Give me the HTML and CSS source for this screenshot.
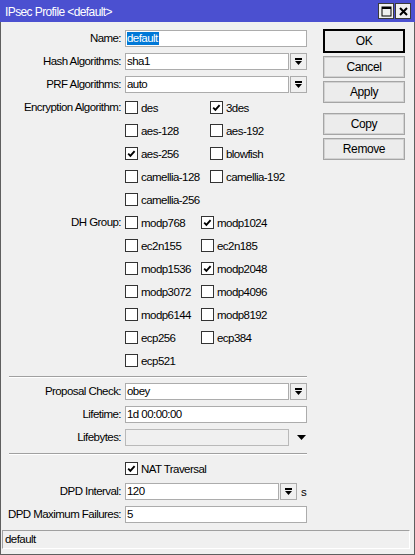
FILE: index.html
```html
<!DOCTYPE html>
<html>
<head>
<meta charset="utf-8">
<title>IPsec Profile</title>
<link rel="stylesheet" href="styles.css">
</head>
<body>
<div class="window">
  <div class="titlebar">
    <span class="title">IPsec Profile &lt;default&gt;</span>
    <div class="tb-buttons">
      <span class="tb-btn"><svg width="11" height="11" viewBox="0 0 11 11"><rect x="1" y="1" width="9" height="9" fill="none" stroke="#000" stroke-width="1"/><rect x="1" y="1" width="9" height="2" fill="#000"/></svg></span>
      <span class="tb-btn"><svg width="11" height="11" viewBox="0 0 11 11"><path d="M2 2L9 9M9 2L2 9" stroke="#000" stroke-width="2"/></svg></span>
    </div>
  </div>
  <div class="main">
    <div class="form">
      <label class="lbl">Name:</label>
      <div class="ctl"><div class="input"><span class="sel">default</span></div></div>

      <label class="lbl">Hash Algorithms:</label>
      <div class="ctl"><div class="input grow">sha1</div><span class="ddbtn"><svg width="9" height="8" viewBox="0 0 9 8"><rect x="1" y="0" width="7" height="2"/><polygon points="1,3 8,3 4.5,7"/></svg></span></div>

      <label class="lbl">PRF Algorithms:</label>
      <div class="ctl"><div class="input grow">auto</div><span class="ddbtn"><svg width="9" height="8" viewBox="0 0 9 8"><rect x="1" y="0" width="7" height="2"/><polygon points="1,3 8,3 4.5,7"/></svg></span></div>

      <label class="lbl">Encryption Algorithm:</label>
      <div class="checks enc">
        <span class="cb"><span class="box"></span>des</span>
        <span class="cb"><span class="box on"><svg width="11" height="11" viewBox="0 0 11 11"><polyline points="2.2,5.6 4.4,7.8 8.6,3.2" fill="none" stroke="#000" stroke-width="1.9"/></svg></span>3des</span>
        <span class="cb"><span class="box"></span>aes-128</span>
        <span class="cb"><span class="box"></span>aes-192</span>
        <span class="cb"><span class="box on"><svg width="11" height="11" viewBox="0 0 11 11"><polyline points="2.2,5.6 4.4,7.8 8.6,3.2" fill="none" stroke="#000" stroke-width="1.9"/></svg></span>aes-256</span>
        <span class="cb"><span class="box"></span>blowfish</span>
        <span class="cb"><span class="box"></span>camellia-128</span>
        <span class="cb"><span class="box"></span>camellia-192</span>
        <span class="cb"><span class="box"></span>camellia-256</span>
      </div>

      <label class="lbl">DH Group:</label>
      <div class="checks dh">
        <span class="cb"><span class="box"></span>modp768</span>
        <span class="cb"><span class="box on"><svg width="11" height="11" viewBox="0 0 11 11"><polyline points="2.2,5.6 4.4,7.8 8.6,3.2" fill="none" stroke="#000" stroke-width="1.9"/></svg></span>modp1024</span>
        <span class="cb"><span class="box"></span>ec2n155</span>
        <span class="cb"><span class="box"></span>ec2n185</span>
        <span class="cb"><span class="box"></span>modp1536</span>
        <span class="cb"><span class="box on"><svg width="11" height="11" viewBox="0 0 11 11"><polyline points="2.2,5.6 4.4,7.8 8.6,3.2" fill="none" stroke="#000" stroke-width="1.9"/></svg></span>modp2048</span>
        <span class="cb"><span class="box"></span>modp3072</span>
        <span class="cb"><span class="box"></span>modp4096</span>
        <span class="cb"><span class="box"></span>modp6144</span>
        <span class="cb"><span class="box"></span>modp8192</span>
        <span class="cb"><span class="box"></span>ecp256</span>
        <span class="cb"><span class="box"></span>ecp384</span>
        <span class="cb"><span class="box"></span>ecp521</span>
      </div>

      <div class="sep"></div>

      <label class="lbl">Proposal Check:</label>
      <div class="ctl"><div class="input grow">obey</div><span class="ddbtn"><svg width="9" height="8" viewBox="0 0 9 8"><rect x="1" y="0" width="7" height="2"/><polygon points="1,3 8,3 4.5,7"/></svg></span></div>

      <label class="lbl">Lifetime:</label>
      <div class="ctl"><div class="input">1d 00:00:00</div></div>

      <label class="lbl">Lifebytes:</label>
      <div class="ctl"><div class="input grow disabled"></div><span class="tri"><svg width="9" height="5" viewBox="0 0 9 5"><polygon points="0,0 9,0 4.5,5"/></svg></span></div>

      <div class="sep"></div>

      <span class="lbl"></span>
      <div class="ctl"><span class="cb"><span class="box on"><svg width="11" height="11" viewBox="0 0 11 11"><polyline points="2.2,5.6 4.4,7.8 8.6,3.2" fill="none" stroke="#000" stroke-width="1.9"/></svg></span>NAT Traversal</span></div>

      <label class="lbl">DPD Interval:</label>
      <div class="ctl"><div class="input dpd">120</div><span class="ddbtn"><svg width="9" height="8" viewBox="0 0 9 8"><rect x="1" y="0" width="7" height="2"/><polygon points="1,3 8,3 4.5,7"/></svg></span><span class="unit">s</span></div>

      <label class="lbl">DPD Maximum Failures:</label>
      <div class="ctl"><div class="input">5</div></div>
    </div>

    <div class="buttons">
      <span class="btn default">OK</span>
      <span class="btn">Cancel</span>
      <span class="btn">Apply</span>
      <span class="btn spaced">Copy</span>
      <span class="btn">Remove</span>
    </div>
  </div>
  <div class="status">default</div>
</div>
</body>
</html>
```

FILE: styles.css
```css
* { box-sizing: border-box; }

html, body {
  margin: 0;
  padding: 0;
  background: #f0f0f0;
}

body {
  font-family: "Liberation Sans", Arial, sans-serif;
  font-size: 11.5px;
  letter-spacing: -0.55px;
  color: #000;
}

.window {
  width: 415px;
  height: 555px;
  display: flex;
  flex-direction: column;
  background: #f0f0f0;
  border-left: 1px solid #5f5f5f;
  border-right: 1px solid #5f5f5f;
  border-bottom: 1px solid #5f5f5f;
}

.titlebar {
  height: 22px;
  background: #4b50d0;
  color: #fff;
  display: flex;
  align-items: center;
  justify-content: space-between;
  padding: 0 4px 0 5px;
  margin: 0 -1px;
}

.title {
  font-size: 12px;
  letter-spacing: -0.6px;
  padding-top: 1px;
}

.tb-buttons {
  display: flex;
  gap: 1px;
}

.tb-btn {
  width: 16px;
  height: 16px;
  background: #f0f0f0;
  border: 1px solid #3a3a3a;
  display: flex;
  align-items: center;
  justify-content: center;
}

.main {
  flex: 1;
  display: flex;
  padding-top: 8px;
}

.form {
  width: 306px;
  display: grid;
  grid-template-columns: 120px 1fr;
  column-gap: 4px;
  row-gap: 6px;
  align-content: start;
}

.lbl {
  height: 17px;
  line-height: 17px;
  text-align: right;
  white-space: nowrap;
}

.ctl {
  height: 17px;
  display: flex;
  align-items: center;
}

.input {
  width: 100%;
  height: 17px;
  line-height: 15px;
  background: #fff;
  border: 1px solid #acacac;
  padding-left: 1px;
  white-space: nowrap;
  overflow: hidden;
}

.input.grow {
  flex: 1;
  width: auto;
}

.input.dpd {
  width: 154px;
  flex: none;
}

.input.disabled {
  background: #f0f0f0;
  border-color: #b9b9b9;
}

.sel {
  display: inline-block;
  background: #0078d7;
  color: #fff;
  line-height: 13px;
  padding: 0 1px 0 0;
}

.ddbtn {
  width: 17px;
  height: 17px;
  flex: none;
  border: 1px solid #acacac;
  background: #f0f0f0;
  display: flex;
  align-items: center;
  justify-content: center;
  margin-left: 1px;
}

.ddbtn svg { display: block; }

.tri {
  width: 17px;
  display: flex;
  justify-content: center;
  margin-left: 1px;
  padding-left: 5px;
}

.unit {
  margin-left: 4px;
}

.checks {
  display: grid;
  row-gap: 6px;
}

.checks.enc { grid-template-columns: 85px auto; }
.checks.dh { grid-template-columns: 76px auto; }

.cb {
  height: 17px;
  display: flex;
  align-items: center;
  white-space: nowrap;
}

.box {
  width: 13px;
  height: 13px;
  flex: none;
  border: 1px solid #333;
  background: #fff;
  margin-right: 3px;
  display: flex;
  align-items: center;
  justify-content: center;
}

.box svg { display: block; }

.sep {
  grid-column: 1 / -1;
  height: 2px;
  margin: 1px 0 -1px 8px;
  border-top: 1px solid #a0a0a0;
  border-bottom: 1px solid #fff;
}

.buttons {
  margin-left: 16px;
  width: 82px;
  display: flex;
  flex-direction: column;
  margin-top: -1px;
}

.btn {
  height: 22px;
  margin-bottom: 3px;
  display: flex;
  align-items: center;
  justify-content: center;
  background: #ececec;
  border: 1px solid #a5a5a5;
  box-shadow: inset 0 0 0 1px #d2d2d2;
  font-size: 12px;
  letter-spacing: -0.4px;
}

.btn.default {
  height: 24px;
  border: 1px solid #000;
  box-shadow: inset 0 0 0 1px #000;
}

.btn.spaced {
  margin-top: 7px;
}

.status {
  height: 19px;
  margin: 0 4px 5px 1px;
  border-top: 1px solid #a0a0a0;
  border-left: 1px solid #a0a0a0;
  border-bottom: 1px solid #fff;
  border-right: 1px solid #fff;
  line-height: 17px;
  padding-left: 2px;
}
```
